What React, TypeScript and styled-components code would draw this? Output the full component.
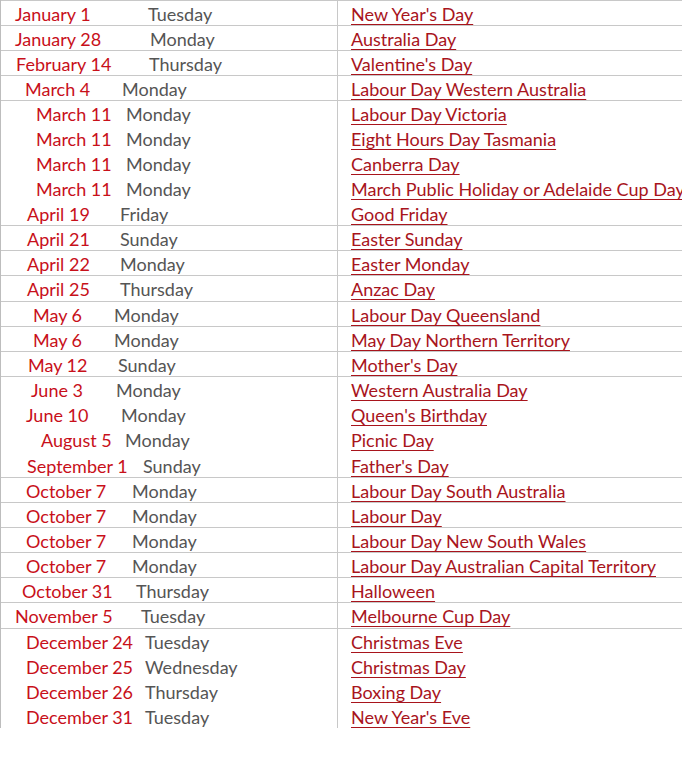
import React from 'react';
import styled, { createGlobalStyle } from 'styled-components';

const GlobalStyle = createGlobalStyle`
  html, body {
    margin: 0;
    padding: 0;
    background: #fff;
    overflow: hidden;
  }
  body {
    font-family: Lato, "Open Sans", sans-serif;
  }
`;

const Sheet = styled.div`
  width: 682px;
  display: flex;
  flex-direction: column;
`;

const Row = styled.div<{ $ruled: boolean; $tall: boolean }>`
  display: grid;
  grid-template-columns: 338px 1fr;
  height: ${p => (p.$tall ? 26 : 25)}px;
  box-sizing: border-box;
  border-top: 1px solid ${p => (p.$ruled ? '#c8c8c8' : 'transparent')};
  font-size: 18px;
  line-height: 24px;
`;

const DateCell = styled.div<{ $dateX: number; $dayX: number }>`
  display: grid;
  grid-template-columns: ${p => p.$dayX}px 1fr;
  box-sizing: border-box;
  border-left: 1px solid #bdbdbd;
  border-right: 1px solid #c8c8c8;
  padding-left: ${p => p.$dateX - 1}px;
  white-space: nowrap;
  margin-top: -1px;
  padding-top: 2px;
`;

const DateText = styled.span`
  color: #c8101a;
`;

const DayText = styled.span`
  color: #555555;
`;

const NameCell = styled.div`
  padding-left: 13px;
  padding-top: 1px;
  white-space: nowrap;
`;

const HolidayLink = styled.a`
  color: #a8141c;
  text-decoration: underline;
  text-underline-offset: 3px;
`;

type Holiday = {
  date: string;
  day: string;
  name: string;
  dateX: number;
  dayX: number;
  ruled: boolean;
  tall: boolean;
};

// date, weekday, holiday, date x, weekday x, line above, 26px row
const rows: [string, string, string, number, number, boolean, boolean?][] = [
  ['January 1', 'Tuesday', "New Year's Day", 15, 148, true],
  ['January 28', 'Monday', 'Australia Day', 15, 150, true],
  ['February 14', 'Thursday', "Valentine's Day", 16, 149, true],
  ['March 4', 'Monday', 'Labour Day Western Australia', 25, 122, true],
  ['March 11', 'Monday', 'Labour Day Victoria', 36, 126, true],
  ['March 11', 'Monday', 'Eight Hours Day Tasmania', 36, 126, false],
  ['March 11', 'Monday', 'Canberra Day', 36, 126, false],
  ['March 11', 'Monday', 'March Public Holiday or Adelaide Cup Day', 36, 126, false],
  ['April 19', 'Friday', 'Good Friday', 27, 120, false],
  ['April 21', 'Sunday', 'Easter Sunday', 27, 120, true],
  ['April 22', 'Monday', 'Easter Monday', 27, 120, true],
  ['April 25', 'Thursday', 'Anzac Day', 27, 120, true, true],
  ['May 6', 'Monday', 'Labour Day Queensland', 33, 114, true],
  ['May 6', 'Monday', 'May Day Northern Territory', 33, 114, true],
  ['May 12', 'Sunday', "Mother's Day", 28, 118, true],
  ['June 3', 'Monday', 'Western Australia Day', 31, 116, true],
  ['June 10', 'Monday', "Queen's Birthday", 26, 121, false],
  ['August 5', 'Monday', 'Picnic Day', 41, 125, false, true],
  ['September 1', 'Sunday', "Father's Day", 27, 143, false],
  ['October 7', 'Monday', 'Labour Day South Australia', 26, 132, true],
  ['October 7', 'Monday', 'Labour Day', 26, 132, true],
  ['October 7', 'Monday', 'Labour Day New South Wales', 26, 132, true],
  ['October 7', 'Monday', 'Labour Day Australian Capital Territory', 26, 132, true],
  ['October 31', 'Thursday', 'Halloween', 22, 136, true],
  ['November 5', 'Tuesday', 'Melbourne Cup Day', 15, 141, true, true],
  ['December 24', 'Tuesday', 'Christmas Eve', 26, 145, true],
  ['December 25', 'Wednesday', 'Christmas Day', 26, 145, false],
  ['December 26', 'Thursday', 'Boxing Day', 26, 145, false],
  ['December 31', 'Tuesday', "New Year's Eve", 26, 145, false],
];

const holidays: Holiday[] = rows.map(([date, day, name, dateX, dayX, ruled, tall]) => ({
  date,
  day,
  name,
  dateX,
  dayX,
  ruled,
  tall: !!tall,
}));

export default function App() {
  return (
    <>
      <GlobalStyle />
      <Sheet>
        {holidays.map((h, i) => (
          <Row key={i} $ruled={h.ruled} $tall={h.tall}>
            <DateCell $dateX={h.dateX} $dayX={h.dayX - h.dateX}>
              <DateText>{h.date}</DateText>
              <DayText>{h.day}</DayText>
            </DateCell>
            <NameCell>
              <HolidayLink href="#">{h.name}</HolidayLink>
            </NameCell>
          </Row>
        ))}
      </Sheet>
    </>
  );
}
